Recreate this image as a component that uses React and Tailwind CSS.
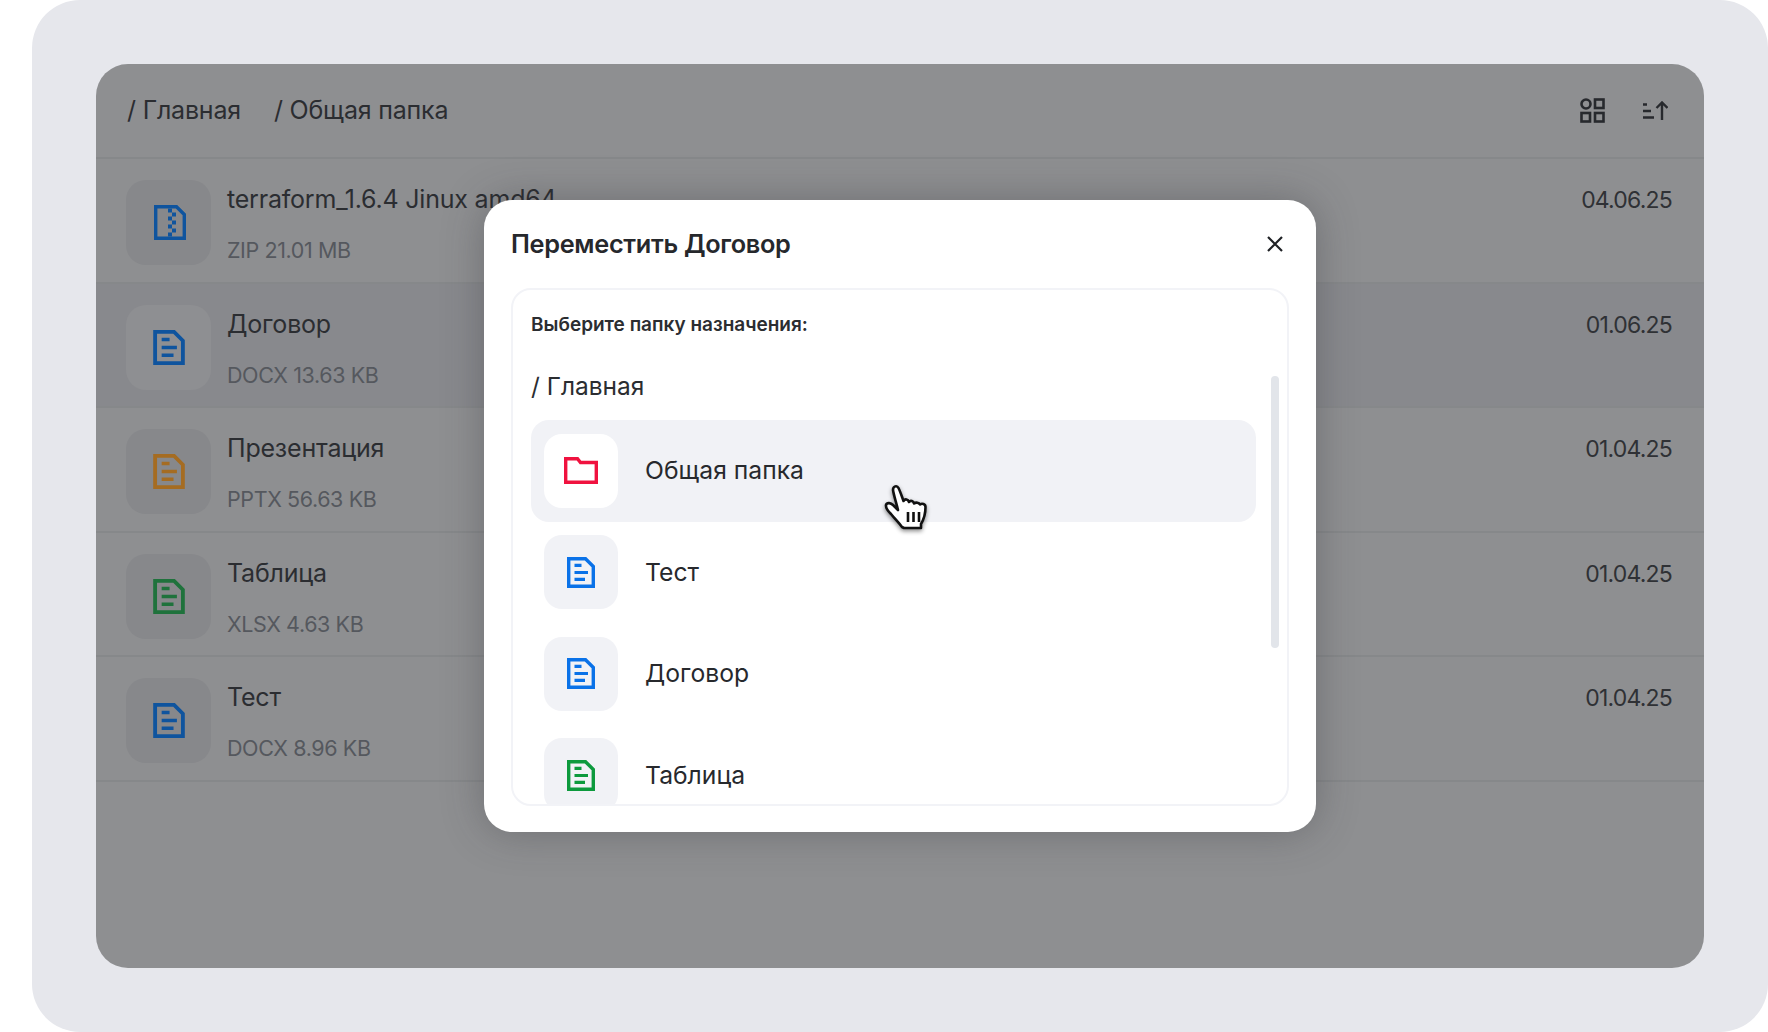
const font = { fontFamily: "Inter, 'Noto Sans', sans-serif" }

const files = [
  { name: "terraform_1.6.4 Jinux amd64", meta: "ZIP 21.01 MB", date: "04.06.25", color: "#0f549e", zip: true },
  { name: "Договор", meta: "DOCX 13.63 KB", date: "01.06.25", color: "#0f549e", active: true },
  { name: "Презентация", meta: "PPTX 56.63 KB", date: "01.04.25", color: "#a56c22" },
  { name: "Таблица", meta: "XLSX 4.63 KB", date: "01.04.25", color: "#1f723c" },
  { name: "Тест", meta: "DOCX 8.96 KB", date: "01.04.25", color: "#0f549e" },
]

const folders = [
  { name: "Общая папка", folder: true, active: true },
  { name: "Тест", color: "#0a72e8" },
  { name: "Договор", color: "#0a72e8" },
  { name: "Таблица", color: "#0d9a3d" },
]

function DocIcon({ color, className }) {
  return (
    <svg viewBox="0 0 28 31" fill="none" className={className}>
      <path d="M1.700 1.700H18.500L26.300 9.500V29.300H1.700Z" stroke={color} strokeWidth="3.400" />
      <path d="M7.500 8.400H14.500M7.500 15.500H21M7.500 22.400H18" stroke={color} strokeWidth="3.200" />
    </svg>
  )
}

function ZipIcon({ color, className }) {
  return (
    <svg viewBox="0 0 32 35" fill={color} className={className}>
      <path d="M1.700 1.700H22.500L30.300 9.500V33.300H1.700Z" fill="none" stroke={color} strokeWidth="3.400" />
      <rect x="14" y="3.500" width="4" height="4" />
      <rect x="18" y="7.500" width="4" height="4" />
      <rect x="14" y="11.500" width="4" height="4" />
      <rect x="18" y="15.500" width="4" height="4" />
      <rect x="14" y="19.500" width="4" height="4" />
      <rect x="18" y="23.500" width="4" height="4" />
      <rect x="14" y="27.500" width="4" height="4" />
    </svg>
  )
}

function FolderIcon() {
  return (
    <svg viewBox="0 0 34 27" fill="none" className="w-[34px] h-[27px]">
      <path d="M1.700 1.700H13.500L16.500 5.500H32.300V25.300H1.700Z" stroke="#f0123f" strokeWidth="3.400" />
    </svg>
  )
}

function HandCursor() {
  return (
    <svg viewBox="0 0 44 46" className="absolute left-[400px] top-[284px] w-[44px] h-[46px] drop-shadow-[0_2px_2px_rgba(0,0,0,0.45)]">
      <path
        d="M18 43C15 39 11 35 7 30C4 27 1.500 24 2 21C3 18 7 19 9 21L14 26C12 18 9.500 10 9 6C9 2 13 1 14.500 4C16.500 8 18 13 19.500 17C21 14.500 24 15 25 18C26.500 16 29.500 17 30 19.500C32 18 35 18.500 36 20.500C38 19 41.500 20 41.500 23C41.500 29 40 35 37 40V44H20Z"
        fill="#fff"
        stroke="#111"
        strokeWidth="2.600"
        strokeLinejoin="round"
      />
      <path d="M24 28V38M29.500 28V38M35 28V38" stroke="#111" strokeWidth="2.600" />
    </svg>
  )
}

function FileRow({ file }) {
  return (
    <div className={`flex items-start justify-between h-[124.500px] pl-[30px] pr-[32px] pt-[21px] border-b-2 border-[#86888a] ${file.active ? "bg-[#88898d]" : ""}`}>
      <div className="flex">
        <div className={`w-[85px] h-[85px] rounded-[20px] flex items-center justify-center ${file.active ? "bg-[#8e8f92]" : "bg-[#87888b]"}`}>
          {file.zip ? (
            <ZipIcon color={file.color} className="w-[32px] h-[35px] ml-[3px]" />
          ) : (
            <DocIcon color={file.color} className="w-[32px] h-[35px]" />
          )}
        </div>
        <div className="ml-4">
          <div className="text-[25px] leading-[32px] tracking-[-0.2px] text-[#2b2d31] mt-[3px]">{file.name}</div>
          <div className="text-[21.500px] leading-[28px] tracking-[-0.4px] text-[#55585e] mt-[21px]">{file.meta}</div>
        </div>
      </div>
      <div className="text-[23px] leading-[32px] tracking-[-0.8px] text-[#2f3135] mt-[4px]">{file.date}</div>
    </div>
  )
}

function FolderRow({ item }) {
  return (
    <div className={`flex items-center h-[101.500px] shrink-0 w-[725px] rounded-[18px] px-[13px] ${item.active ? "bg-[#f1f2f6]" : ""}`}>
      <div className={`w-[74px] h-[74px] rounded-[18px] flex items-center justify-center ${item.active ? "bg-white" : "bg-[#f1f2f6]"}`}>
        {item.folder ? <FolderIcon /> : <DocIcon color={item.color} className="w-[28px] h-[31px]" />}
      </div>
      <div className="ml-[27px] text-[24.700px] text-[#27292d]">{item.name}</div>
    </div>
  )
}

export default function App() {
  return (
    <div style={font} className="w-[1768px] h-[1032px] bg-white overflow-hidden pl-8">
      <div className="w-[1736px] h-[1032px] bg-[#e6e7ec] rounded-[48px] pl-16 pt-16">
        <div className="relative w-[1608px] h-[904px] bg-[#8e8f91] rounded-[32px] overflow-hidden">
          <div className="flex items-center justify-between h-[95px] pl-[31px] pr-[36px] border-b-2 border-[#86888a]">
            <div className="flex gap-[33px] text-[25px] tracking-[-0.2px] text-[#2b2d31]">
              <span>/ Главная</span>
              <span>/ Общая папка</span>
            </div>
            <div className="flex items-center gap-[37px]">
              <svg viewBox="0 0 25 25" fill="none" stroke="#27292d" strokeWidth="2.600" className="w-[25px] h-[25px]">
                <circle cx="6" cy="6" r="4.500" />
                <rect x="15" y="1.500" width="8.500" height="8.500" />
                <rect x="1.500" y="15" width="8.500" height="8.500" />
                <rect x="15" y="15" width="8.500" height="8.500" />
              </svg>
              <svg viewBox="0 0 26 20" fill="none" stroke="#27292d" strokeWidth="2.400" className="w-[26px] h-[20px]">
                <path d="M1 3.500H5M1 10H9M1 16.500H12M20 19V2M14.500 7L20 1.500L25.500 7" />
              </svg>
            </div>
          </div>
          {files.map(file => (
            <FileRow key={file.name} file={file} />
          ))}

          <div className="absolute inset-0 flex items-center justify-center">
            <div className="relative w-[832px] h-[632px] bg-white rounded-[28px] px-[27px] shadow-[0_0_40px_rgba(50,50,55,0.35)]">
              <div className="flex items-center justify-between h-[88px]">
                <div className="text-[25.300px] font-semibold tracking-[-0.3px] text-[#26282c]">Переместить Договор</div>
                <svg viewBox="0 0 24 24" fill="none" stroke="#1f2125" strokeWidth="2.200" className="w-[24px] h-[24px] mr-[2px]">
                  <path d="M5 5L19 19M19 5L5 19" />
                </svg>
              </div>
              <div className="relative h-[518px] rounded-[20px] border-2 border-[#f2f3f7] px-[18px] overflow-hidden">
                <div className="text-[19px] font-semibold text-[#2b2d31] mt-[21px] leading-[28px]">Выберите папку назначения:</div>
                <div className="text-[24.500px] text-[#2b2d31] mt-[29px] leading-[36px]">/ Главная</div>
                <div className="mt-[16px] flex flex-col">
                  {folders.map(item => (
                    <FolderRow key={item.name} item={item} />
                  ))}
                </div>
                <div className="absolute right-[8px] top-[86px] w-[8px] h-[272px] rounded-full bg-[#e2e5ea]"></div>
              </div>
              <HandCursor />
            </div>
          </div>
        </div>
      </div>
    </div>
  )
}
